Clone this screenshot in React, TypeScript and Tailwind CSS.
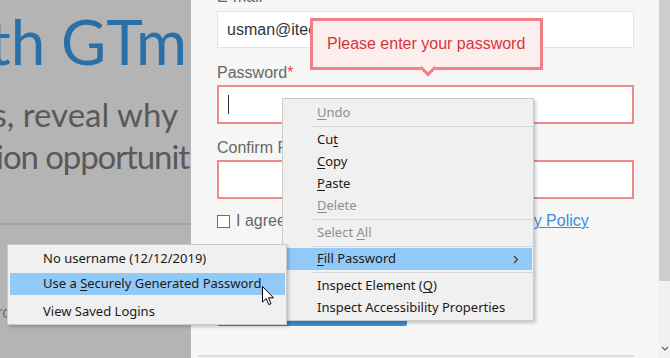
import React from "react"

type ItemProps = {
  label: React.ReactNode
  disabled?: boolean
  active?: boolean
  sub?: boolean
}

function Key({ children }: { children: React.ReactNode }) {
  return <span className="underline underline-offset-2 decoration-1">{children}</span>
}

function MenuItem({ label, disabled, active, sub }: ItemProps) {
  return (
    <div
      className={`flex items-center h-[22px] ml-[4px] mr-[1px] pl-[30px] pr-[12px] whitespace-nowrap ${
        active ? "bg-[#91c9f7]" : ""
      } ${disabled ? "text-[#8e8e8e]" : "text-[#1a1a1a]"}`}
    >
      <span className="flex-1">{label}</span>
      {sub && (
        <svg width="6" height="9" viewBox="0 0 6 9" className="mr-[1px]">
          <path d="M1 1 L4.5 4.5 L1 8" fill="none" stroke="#333" strokeWidth="1.1" />
        </svg>
      )}
    </div>
  )
}

function SubItem({ label, active }: { label: React.ReactNode; active?: boolean }) {
  return (
    <div
      className={`flex items-center h-[22px] ml-[2px] mr-[1px] pl-[33px] whitespace-nowrap text-[#1a1a1a] ${
        active ? "bg-[#91c9f7]" : ""
      }`}
    >
      <span>{label}</span>
    </div>
  )
}

function Separator({ h }: { h: "4" | "5" }) {
  return (
    <div className={`flex items-center ml-[29px] ${h === "4" ? "h-[4px]" : "h-[5px]"}`}>
      <div className="h-px flex-1 bg-[#d6d6d6]" />
    </div>
  )
}

export default function App() {
  return (
    <div className="relative w-[670px] h-[358px] overflow-hidden flex bg-[#b4b4b4]">
      {/* dimmed page behind the dialog */}
      <div className="w-[191px] shrink-0 overflow-hidden flex flex-col font-[Lato,sans-serif]">
        <div className="mt-[10px] flex justify-end pr-[4px] text-[62px] leading-none text-[#2b6fa7] whitespace-nowrap">
          Grow with GTm
        </div>
        <div className="mt-[21px] flex flex-col text-[33px] leading-[42px] text-[#595959] whitespace-nowrap">
          <div className="flex justify-end pr-[13px]">loads, reveal why</div>
          <div className="flex justify-end pr-[2px] tracking-[-1.1px]">optimization opportunit</div>
        </div>
        <div className="mt-[46px] h-[2px] bg-[#a2a2a2]" />
        <div className="mt-[76px] ml-[-3px] text-[16px] text-[#6d6d6d] font-['Liberation_Sans',Arial,sans-serif]">
          rc
        </div>
      </div>

      {/* dialog */}
      <div className="w-[468px] shrink-0 bg-[#f6f6f6] flex flex-col pl-[26px] pr-[25px] font-['Liberation_Sans',Arial,sans-serif] text-[16px]">
        <div className="mt-[-12px] leading-[18px] text-[#666]">E-mail</div>
        <div className="mt-[5px] h-[37px] shrink-0 bg-white border border-[#e4e4e4] flex items-center pl-[9px] text-[#333]">
          usman@itechbrand.com
        </div>

        <div className="mt-[16px] leading-[18px] text-[#666]">
          Password<span className="text-[#e0474c]">*</span>
        </div>
        <div className="mt-[3px] h-[39px] shrink-0 bg-white border-2 border-[#f08a8a] flex items-center pl-[9px]">
          <span className="w-px h-[19px] bg-[#333]" />
        </div>

        <div className="mt-[15px] leading-[18px] text-[#666]">Confirm Password</div>
        <div className="mt-[3px] h-[39px] shrink-0 bg-white border-2 border-[#f08a8a]" />

        <div className="mt-[13px] flex items-center gap-[6px] leading-[18px] text-[#666] whitespace-nowrap">
          <span className="w-[13px] h-[13px] border border-[#6f6f6f] bg-white" />
          <span>
            I agree to the Terms of Service and{" "}
            <span className="text-[#3b8ed6] underline">Privacy Policy</span>
          </span>
        </div>

        <div className="mt-[56px] w-[190px] h-[40px] shrink-0 bg-[#3b8dd6] rounded-[2px]" />

        <div className="mt-[29px] ml-[-19px] h-[2px] bg-[#dcdcdc]" />
      </div>

      {/* scrollbar */}
      <div className="w-[11px] shrink-0 flex flex-col bg-[#f0f0f0]">
        <div className="h-[281px] bg-[#cdcdcd]" />
        <div className="flex-1" />
        <div className="h-[12px] flex items-start justify-center">
          <svg width="8" height="5" viewBox="0 0 8 5">
            <path d="M1 1 L4 4 L7 1" fill="none" stroke="#606060" strokeWidth="1.2" />
          </svg>
        </div>
      </div>

      {/* validation tooltip */}
      <div className="absolute left-[310px] top-[18px] w-[233px] h-[52px] border-[3px] border-[#f17f84] bg-[#fdeeee] flex items-center pl-[14px] font-['Liberation_Sans',Arial,sans-serif] text-[16px] text-[#d8343c] whitespace-nowrap">
        Please enter your password
        <div className="absolute left-[109px] top-[41px] w-[12px] h-[12px] rotate-45 bg-[#fdeeee] border-r-[3px] border-b-[3px] border-[#f17f84]" />
      </div>

      {/* context menu */}
      <div className="absolute left-[282px] top-[98px] w-[252px] border border-[#cccccc] bg-[#f0f0f0] pt-[3px] pb-[1px] shadow-[2px_2px_3px_rgba(0,0,0,0.2)] font-['Noto_Sans',sans-serif] text-[13px]">
        <MenuItem label={<><Key>U</Key>ndo</>} disabled />
        <Separator h="5" />
        <MenuItem label={<>Cu<Key>t</Key></>} />
        <MenuItem label={<><Key>C</Key>opy</>} />
        <MenuItem label={<><Key>P</Key>aste</>} />
        <MenuItem label={<><Key>D</Key>elete</>} disabled />
        <Separator h="5" />
        <MenuItem label={<>Select <Key>A</Key>ll</>} disabled />
        <Separator h="4" />
        <MenuItem label={<><Key>F</Key>ill Password</>} active sub />
        <Separator h="5" />
        <MenuItem label={<>Inspect Element (<Key>Q</Key>)</>} />
        <MenuItem label="Inspect Accessibility Properties" />
      </div>

      {/* fill password submenu */}
      <div className="absolute left-[7px] top-[244px] w-[280px] border border-[#cccccc] bg-[#f0f0f0] pt-[3px] pb-[1px] shadow-[2px_2px_3px_rgba(0,0,0,0.2)] font-['Noto_Sans',sans-serif] text-[13px]">
        <SubItem label="No username (12/12/2019)" />
        <div className="h-[3px]" />
        <SubItem label={<>Use a <Key>S</Key>ecurely Generated Password</>} active />
        <div className="h-[6px]" />
        <SubItem label="View Saved Logins" />
      </div>

      {/* mouse pointer */}
      <svg
        className="absolute left-[262px] top-[286px]"
        width="13"
        height="20"
        viewBox="0 0 13 20"
      >
        <path
          d="M0.5 0.5 L0.5 16 L4.2 12.6 L6.8 18.6 L9 17.6 L6.5 11.8 L11.5 11.8 Z"
          fill="#fff"
          stroke="#000"
          strokeWidth="1"
          strokeLinejoin="round"
        />
      </svg>
    </div>
  )
}
